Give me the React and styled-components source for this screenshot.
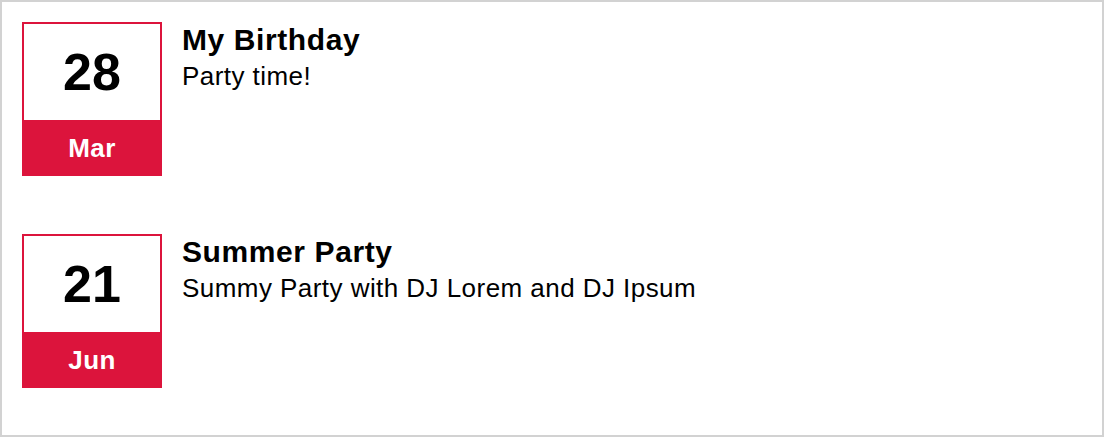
import React from "react";
import styled, { createGlobalStyle } from "styled-components";

const GlobalStyle = createGlobalStyle`
  html, body {
    margin: 0;
    padding: 0;
    background: #ffffff;
  }
  body {
    font-family: "Liberation Sans", Arial, sans-serif;
    color: #000;
  }
`;

const Frame = styled.div`
  box-sizing: border-box;
  width: 1104px;
  height: 437px;
  border: 2px solid #d2d2d2;
  padding: 20px;
  display: flex;
  flex-direction: column;
  gap: 58px;
`;

const Event = styled.div`
  display: flex;
  align-items: flex-start;
  gap: 20px;
`;

const DateBox = styled.div`
  box-sizing: border-box;
  width: 140px;
  height: 154px;
  border: 2px solid #dc143c;
  display: flex;
  flex-direction: column;
  flex-shrink: 0;
`;

const Day = styled.div`
  height: 96px;
  display: flex;
  align-items: center;
  justify-content: center;
  font-size: 52px;
  font-weight: bold;
  background: #fff;
`;

const Month = styled.div`
  flex: 1;
  display: flex;
  align-items: center;
  justify-content: center;
  padding-top: 3px;
  background: #dc143c;
  color: #fff;
  font-size: 26px;
  font-weight: bold;
  letter-spacing: 0.4px;
`;

const Info = styled.div`
  display: flex;
  flex-direction: column;
  padding-top: 2px;
`;

const Title = styled.h3`
  margin: 0;
  font-size: 30px;
  font-weight: bold;
  line-height: 31px;
  letter-spacing: 0.6px;
`;

const Text = styled.p`
  margin: 7px 0 0;
  font-size: 26px;
  line-height: 29px;
  letter-spacing: 0.45px;
`;

const events = [
  { day: "28", month: "Mar", title: "My Birthday", text: "Party time!" },
  {
    day: "21",
    month: "Jun",
    title: "Summer Party",
    text: "Summy Party with DJ Lorem and DJ Ipsum",
  },
];

export default function App() {
  return (
    <>
      <GlobalStyle />
      <Frame>
        {events.map((e) => (
          <Event key={e.title}>
            <DateBox>
              <Day>{e.day}</Day>
              <Month>{e.month}</Month>
            </DateBox>
            <Info>
              <Title>{e.title}</Title>
              <Text>{e.text}</Text>
            </Info>
          </Event>
        ))}
      </Frame>
    </>
  );
}
